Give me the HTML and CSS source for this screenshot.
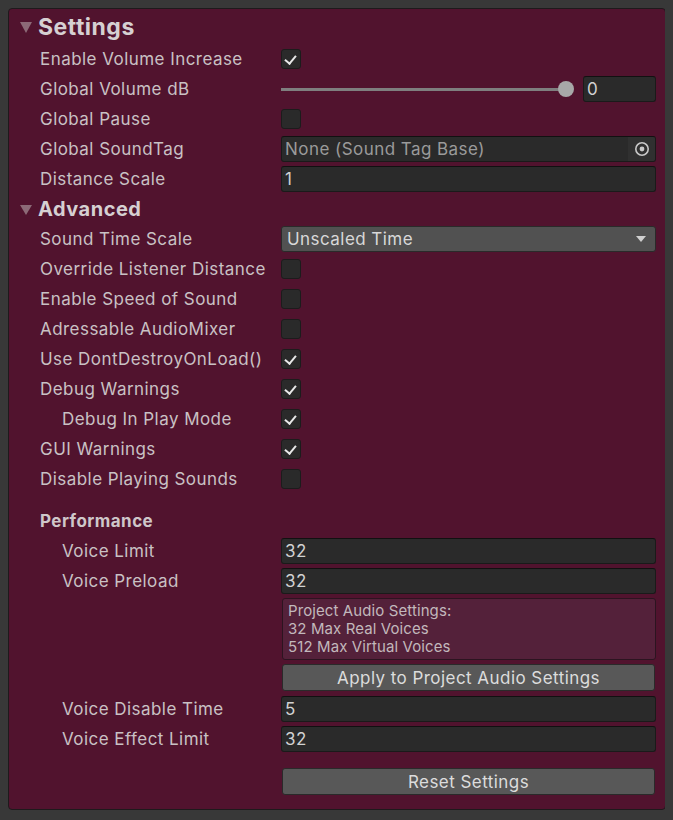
FILE: index.html
```html
<!DOCTYPE html>
<html>
<head>
<meta charset="utf-8">
<link rel="stylesheet" href="styles.css">
</head>
<body>
<div class="panel">
  <div class="header"><span class="tri"></span>Settings</div>
  <div class="row"><span class="label">Enable Volume Increase</span><span class="check on"></span></div>
  <div class="row"><span class="label">Global Volume dB</span>
    <div class="slider"><div class="track"><span class="thumb"></span></div><div class="field num">0</div></div>
  </div>
  <div class="row"><span class="label">Global Pause</span><span class="check"></span></div>
  <div class="row"><span class="label">Global SoundTag</span>
    <div class="field obj"><span class="objtext">None (Sound Tag Base)</span><span class="picker"><svg width="16" height="16" viewBox="0 0 16 16"><circle cx="8" cy="8" r="6.2" fill="none" stroke="#c8c8c8" stroke-width="1.6"/><circle cx="8" cy="8" r="2.4" fill="#c8c8c8"/></svg></span></div>
  </div>
  <div class="row"><span class="label">Distance Scale</span><div class="field">1</div></div>
  <div class="header sub"><span class="tri"></span>Advanced</div>
  <div class="row"><span class="label">Sound Time Scale</span><div class="dropdown">Unscaled Time<span class="arrow"></span></div></div>
  <div class="row"><span class="label">Override Listener Distance</span><span class="check"></span></div>
  <div class="row"><span class="label">Enable Speed of Sound</span><span class="check"></span></div>
  <div class="row"><span class="label">Adressable AudioMixer</span><span class="check"></span></div>
  <div class="row"><span class="label">Use DontDestroyOnLoad()</span><span class="check on"></span></div>
  <div class="row"><span class="label">Debug Warnings</span><span class="check on"></span></div>
  <div class="row"><span class="label ind">Debug In Play Mode</span><span class="check on"></span></div>
  <div class="row"><span class="label">GUI Warnings</span><span class="check on"></span></div>
  <div class="row"><span class="label">Disable Playing Sounds</span><span class="check"></span></div>
  <div class="section">Performance</div>
  <div class="row"><span class="label ind">Voice Limit</span><div class="field">32</div></div>
  <div class="row"><span class="label ind">Voice Preload</span><div class="field">32</div></div>
  <div class="info">Project Audio Settings:<br>32 Max Real Voices<br>512 Max Virtual Voices</div>
  <div class="btnrow"><div class="button">Apply to Project Audio Settings</div></div>
  <div class="row"><span class="label ind">Voice Disable Time</span><div class="field">5</div></div>
  <div class="row"><span class="label ind">Voice Effect Limit</span><div class="field">32</div></div>
  <div class="btnrow reset"><div class="button">Reset Settings</div></div>
</div>
</body>
</html>
```

FILE: styles.css
```css
html, body {
  background: #383838;
}
body {
  margin: 8px;
  font-family: Inter, "Noto Sans", sans-serif;
  color: #c9c1c4;
  letter-spacing: 0.45px;
}
.panel {
  box-sizing: border-box;
  width: 658px;
  height: 802px;
  background: #51132e;
  border: 1px solid #1e1a1c;
  border-radius: 4px;
  padding: 0 9px 0 0;
}
.header {
  display: flex;
  align-items: center;
  height: 34px;
  padding-top: 1px;
  font-size: 23px;
  font-weight: 700;
  color: #d6d0d2;
  padding-left: 11px;
  letter-spacing: 0.5px;
}
.header.sub {
  height: 30px;
  font-size: 20px;
  padding-top: 0;
}
.tri {
  width: 0;
  height: 0;
  border-left: 6px solid transparent;
  border-right: 6px solid transparent;
  border-top: 11px solid #8c6a77;
  margin-right: 6px;
  margin-top: 1px;
}
.header.sub .tri {
  border-top-width: 10px;
}
.row {
  display: grid;
  grid-template-columns: 272px 1fr;
  align-items: center;
  height: 30px;
}
.label {
  padding-left: 31px;
  font-size: 17px;
  white-space: nowrap;
}
.label.ind {
  padding-left: 53px;
}
.check {
  box-sizing: border-box;
  width: 20px;
  height: 20px;
  background: #2a2a2a;
  border: 1px solid #1c1c1c;
  border-radius: 3px;
  position: relative;
}
.check.on::after {
  content: "";
  position: absolute;
  left: 5px;
  top: 3px;
  width: 5px;
  height: 9px;
  border-right: 2.5px solid #e8e8e8;
  border-bottom: 2.5px solid #e8e8e8;
  transform: rotate(40deg);
}
.field {
  box-sizing: border-box;
  height: 26px;
  background: #2a2a2a;
  border: 1px solid #1a1a1a;
  border-top-color: #111;
  border-radius: 3px;
  font-size: 17px;
  color: #d2d2d2;
  padding-left: 3px;
  display: flex;
  align-items: center;
}
.slider {
  display: flex;
  align-items: center;
}
.track {
  flex: 1;
  height: 3px;
  background: #7f7f7f;
  position: relative;
  margin-right: 17px;
}
.thumb {
  position: absolute;
  right: -8px;
  top: -7px;
  width: 16px;
  height: 16px;
  border-radius: 50%;
  background: #a8a8a8;
}
.field.num {
  width: 73px;
  flex: none;
}
.field.obj {
  padding-right: 0;
  justify-content: space-between;
}
.objtext {
  color: #9a9a9a;
}
.picker {
  width: 27px;
  height: 24px;
  background: #303030;
  display: flex;
  align-items: center;
  justify-content: center;
  border-radius: 0 2px 2px 0;
}
.dropdown {
  box-sizing: border-box;
  height: 26px;
  background: #515151;
  border: 1px solid #2a2a2a;
  border-radius: 3px;
  font-size: 17px;
  color: #d8d8d8;
  padding-left: 5px;
  display: flex;
  align-items: center;
  justify-content: space-between;
}
.arrow {
  width: 0;
  height: 0;
  border-left: 5px solid transparent;
  border-right: 5px solid transparent;
  border-top: 6px solid #d0d0d0;
  margin-right: 9px;
}
.section {
  height: 30px;
  margin-top: 12px;
  display: flex;
  align-items: center;
  padding-left: 31px;
  font-size: 17px;
  font-weight: 700;
  color: #cfc7ca;
}
.info {
  box-sizing: border-box;
  margin: 2px 0 0 273px;
  height: 62px;
  background: #54213a;
  border: 1px solid #2c1420;
  border-radius: 3px;
  padding: 3px 0 0 5px;
  font-size: 15px;
  line-height: 18px;
  color: #c2b8bc;
  letter-spacing: 0.1px;
}
.btnrow {
  padding: 4px 1px 0 273px;
  height: 27px;
  margin-bottom: 3px;
}
.button {
  box-sizing: border-box;
  height: 27px;
  background: #585858;
  border: 1px solid #2a2a2a;
  border-radius: 3px;
  font-size: 17px;
  color: #dcdcdc;
  display: flex;
  align-items: center;
  justify-content: center;
}
.btnrow.reset {
  padding-top: 14px;
  margin-bottom: 0;
}
```
